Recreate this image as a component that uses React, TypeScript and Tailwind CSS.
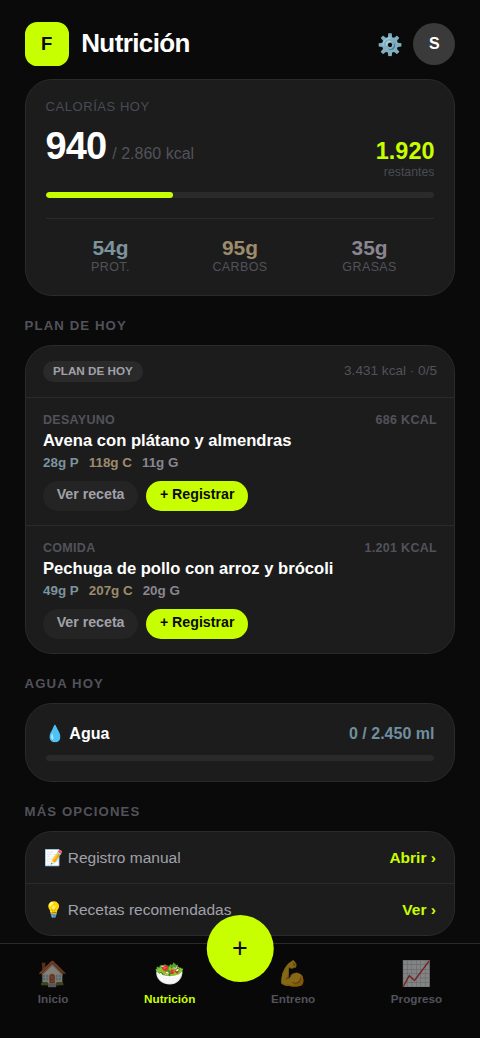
import React from 'react';
import clsx from 'clsx';

interface Meal {
  id: string;
  slot: string;
  name: string;
  kcal: string;
  protein: number;
  carbs: number;
  fat: number;
}

const meals: Meal[] = [
  { id: 'desayuno', slot: 'DESAYUNO', name: 'Avena con plátano y almendras', kcal: '686', protein: 28, carbs: 118, fat: 11 },
  { id: 'comida', slot: 'COMIDA', name: 'Pechuga de pollo con arroz y brócoli', kcal: '1.201', protein: 49, carbs: 207, fat: 20 },
];

const macros = [
  { label: 'PROT.', value: '54g', color: 'text-[#7b949e]' },
  { label: 'CARBOS', value: '95g', color: 'text-[#9c8b6c]' },
  { label: 'GRASAS', value: '35g', color: 'text-[#8a8591]' },
];

const options = [
  { icon: '📝', label: 'Registro manual', action: 'Abrir ›' },
  { icon: '💡', label: 'Recetas recomendadas', action: 'Ver ›' },
];

const tabs = [
  { icon: '🏠', label: 'Inicio' },
  { icon: '🥗', label: 'Nutrición' },
  { icon: '💪', label: 'Entreno' },
  { icon: '📈', label: 'Progreso' },
];

const Card: React.FC<{ className?: string; children: React.ReactNode }> = ({ className, children }) => (
  <div className={clsx('overflow-hidden rounded-[27px] border border-[#2a2a2a] bg-[#1c1c1c]', className)}>
    {children}
  </div>
);

const SectionTitle: React.FC<{ children: React.ReactNode }> = ({ children }) => (
  <h2 className="mt-[22px] mb-[12px] text-[13.2px] leading-[15px] font-bold tracking-[1.1px] text-[#52525a]">
    {children}
  </h2>
);

const ProgressBar: React.FC<{ value: number; total: number }> = ({ value, total }) => (
  <div className="h-[6px] overflow-hidden rounded-full bg-[#2a2a2a]">
    <div className="h-full rounded-full bg-[#c8ff00]" style={{ width: `${(value / total) * 100}%` }} />
  </div>
);

const MealRow: React.FC<{ meal: Meal }> = ({ meal }) => (
  <div className="h-[128px] border-t border-[#2a2a2a] px-[17.4px] pt-[14.5px]">
    <div className="flex justify-between text-[12.5px] leading-[14px] font-bold tracking-[0.3px] text-[#52525a]">
      <span>{meal.slot}</span>
      <span>{meal.kcal} KCAL</span>
    </div>
    <h3 className="mt-[4px] text-[16.6px] leading-[20px] font-bold text-white">{meal.name}</h3>
    <div className="mt-[4.5px] flex gap-[10px] text-[13.4px] leading-[15px] font-bold">
      <span className="text-[#7b949e]">{meal.protein}g P</span>
      <span className="text-[#9c8b6c]">{meal.carbs}g C</span>
      <span className="text-[#8a8591]">{meal.fat}g G</span>
    </div>
    <div className="mt-[11px] flex gap-2 text-[14.2px] font-bold">
      <button className="h-[30px] rounded-full bg-[#242424] px-[13.7px] pb-[2px] text-[#a1a1aa]">Ver receta</button>
      <button className="h-[30px] rounded-full bg-[#c8ff00] px-[13.7px] pb-[2px] text-[#0a0a0a]">+ Registrar</button>
    </div>
  </div>
);

const App: React.FC = () => {
  const activeTab = 'Nutrición';

  return (
    <div className="flex h-screen flex-col overflow-hidden bg-[#0a0a0a] font-['Liberation_Sans','Noto_Color_Emoji',sans-serif] text-white">
      <main className="min-h-0 flex-1 px-[24.6px] pt-[22px]">
        {/* Cabecera */}
        <header className="flex h-[57px] items-start justify-between">
          <div className="flex items-center gap-[12.3px]">
            <div className="flex size-[44.3px] items-center justify-center rounded-[12.3px] bg-[#c8ff00] text-[18.5px] font-bold text-[#0a0a0a]">
              F
            </div>
            <h1 className="pb-[2px] text-[26px] leading-[30px] font-bold tracking-[-0.6px]">Nutrición</h1>
          </div>
          <div className="flex h-[44.3px] items-center gap-[10px]">
            <span className="pt-[2px] text-[20.9px] leading-none">⚙️</span>
            <div className="flex size-[42px] items-center justify-center rounded-full bg-[#3a3a3a] text-[16px] font-bold">
              S
            </div>
          </div>
        </header>

        {/* Calorías */}
        <Card className="h-[217px] px-[20px] pt-[19px]">
          <p className="text-[13px] leading-[15px] tracking-[0.55px] text-[#484b55]">CALORÍAS HOY</p>
          <div className="mt-[10px] flex h-[68px] justify-between">
            <div className="text-[38px] leading-[44px] font-bold tracking-[-0.9px]">
              940
              <span className="ml-[6px] text-[16px] font-normal tracking-normal text-[#52525a]">/ 2.860 kcal</span>
            </div>
            <div className="pt-[14px] text-right">
              <p className="text-[23.4px] leading-[27px] font-bold text-[#c8ff00]">1.920</p>
              <p className="text-[12.3px] leading-[14px] text-[#484b55]">restantes</p>
            </div>
          </div>
          <ProgressBar value={940} total={2860} />
          <div className="mt-[20px] grid grid-cols-3 border-t border-[#2a2a2a] pt-[17px] text-center">
            {macros.map((macro) => (
              <div key={macro.label}>
                <p className={clsx('text-[20.9px] leading-[24px] font-bold', macro.color)}>{macro.value}</p>
                <p className="text-[12.5px] leading-[15px] tracking-[0.4px] text-[#52525a]">{macro.label}</p>
              </div>
            ))}
          </div>
        </Card>

        {/* Plan del día */}
        <SectionTitle>PLAN DE HOY</SectionTitle>
        <Card className="h-[309px]">
          <div className="flex h-[51px] items-center justify-between px-[17.4px]">
            <span className="rounded-full bg-[#2a2a2a] px-[10px] pt-[3px] pb-[4.4px] text-[11.7px] leading-[14px] font-bold text-[#a1a1aa]">
              PLAN DE HOY
            </span>
            <span className="text-[13.6px] text-[#52525a]">3.431 kcal · 0/5</span>
          </div>
          {meals.map((meal) => (
            <MealRow key={meal.id} meal={meal} />
          ))}
        </Card>

        {/* Agua */}
        <SectionTitle>AGUA HOY</SectionTitle>
        <Card className="h-[79px] px-[20px] pt-[20px]">
          <div className="mb-[11px] flex justify-between text-[16px] leading-[20px] font-bold">
            <span>💧 Agua</span>
            <span className="text-[#6f8f9f]">0 / 2.450 ml</span>
          </div>
          <ProgressBar value={0} total={2450} />
        </Card>

        <SectionTitle>MÁS OPCIONES</SectionTitle>
        <Card className="divide-y divide-[#2a2a2a]">
          {options.map((option) => (
            <div key={option.label} className="flex h-[51.5px] items-center justify-between px-[18.5px] pt-[1px] text-[15.5px]">
              <span className="text-[#a1a1aa]">
                {option.icon} {option.label}
              </span>
              <span className="font-bold text-[#c8ff00]">{option.action}</span>
            </div>
          ))}
        </Card>
      </main>

      {/* Navegación inferior */}
      <nav className="relative flex h-[95px] shrink-0 items-start justify-around border-t-[1.5px] border-[#2a2a2a] bg-[#080808] pt-[15px]">
        {tabs.map((tab) => (
          <button
            key={tab.label}
            className={clsx(
              'flex flex-col items-center text-[11.7px] leading-[14px] font-bold',
              tab.label === activeTab ? 'text-[#c8ff00]' : 'text-[#52525a]'
            )}
          >
            <span className={clsx('mb-[3px] text-[24.6px] leading-[30px]', tab.label !== activeTab && 'opacity-50')}>
              {tab.icon}
            </span>
            {tab.label}
          </button>
        ))}
        <button className="absolute -top-[29px] left-1/2 flex size-[66.5px] -translate-x-1/2 items-center justify-center rounded-full bg-[#c8ff00] text-[27px] text-[#0a0a0a]">
          +
        </button>
      </nav>
    </div>
  );
};

export default App;
